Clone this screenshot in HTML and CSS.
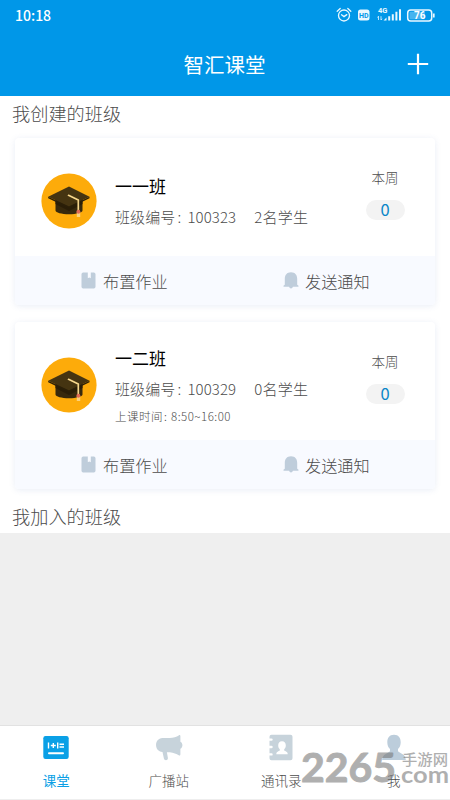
FILE: index.html
```html
<!DOCTYPE html>
<html lang="zh-CN">
<head>
<meta charset="utf-8">
<title>智汇课堂</title>
<link rel="stylesheet" href="styles.css">
</head>
<body>
<svg class="defs" width="0" height="0">
  <symbol id="cap" viewBox="0 0 56 56">
    <circle cx="28" cy="28" r="27.6" fill="#fdab0a"/>
    <path d="M14.5 26v11.5c0 2 6 3.8 13.5 3.8s13.5-1.8 13.5-3.8V26z" fill="#37290d"/>
    <path d="M14.5 28 28 35l13.500-7v3L28 38l-13.500-7z" fill="#2a1e08"/>
    <path d="M28 13.500 48.500 23.800 28 33.500 7.200 23.800z" fill="#453411"/>
    <path d="M7.200 23.800 28 33.500l20.500-9.700v1.500L28 35.200 7.200 25.300z" fill="#2b1f08"/>
    <path d="m27.500 22.300 9.800 4.700v12" fill="none" stroke="#f6d68a" stroke-width="1.700" stroke-linecap="round" stroke-linejoin="round"/>
    <path d="M35.800 39h3.400v5h-3.400z" fill="#fbd27c"/>
    <circle cx="37.400" cy="38.700" r="2" fill="#e06a55"/>
  </symbol>
  <symbol id="book" viewBox="0 0 15 17">
    <path d="M2.200.5h4.600v5.800L8.300 5.400l1.500.9V.5h3Q14.500.5 14.500 2.200v12.600q0 1.700-1.700 1.700H2.200Q.5 16.500.5 14.800V2.200Q.5.5 2.200.5z" fill="#bfcddb"/>
  </symbol>
  <symbol id="bell" viewBox="0 0 16 17">
    <path d="M8 .3c4.100 0 6.200 2.900 6.200 6.500v5.600c0 .8 1.500.8 1.500 1.700 0 .5-.3.700-.8.700H9.900Q9.500 16.500 8 16.500T6.100 14.800h-5c-.5 0-.8-.2-.8-.7 0-.9 1.500-.9 1.500-1.700V6.800C1.800 3.200 3.900.3 8 .3z" fill="#bfcddb"/>
  </symbol>
</svg>

<header class="header">
  <div class="status">
    <span class="time">10:18</span>
    <svg class="status-icons" width="104" height="18" viewBox="0 0 104 18">
      <g fill="none" stroke="#e9f8ff" stroke-width="1.300" stroke-linecap="round">
        <circle cx="8" cy="9.500" r="5.500"/>
        <path d="m5.500 8.800 2.500 1.800 2.800-2M1.200 5.200 4.200 2.500M14.800 5.200l-3-2.700"/>
      </g>
      <rect x="22" y="3.500" width="11.500" height="11" rx="2.500" fill="#e9f8ff"/>
      <text class="t-hd" x="27.700" y="11.600" text-anchor="middle">HD</text>
      <text class="t-4g" x="42" y="7.200">4G</text>
      <path d="M42.500 14v-3.800m-1 1.300 1-1.300M45 10.200V14m1-1.300L45 14" fill="none" stroke="#e9f8ff" stroke-width=".8"/>
      <path d="M47.500 14.500 50.500 11.500v3zM52.200 10.200h2v4.300h-2zM55.800 8.200h2v6.300h-2zM59.400 5.800h2v8.700h-2zM63 3.200h2v11.300h-2z" fill="#e9f8ff"/>
      <rect x="71.700" y="4" width="24" height="11" rx="3" fill="none" stroke="#e9f8ff" stroke-width="1.500"/>
      <rect x="73.500" y="5.800" width="15.500" height="7.400" rx="1" fill="#45b4ef"/>
      <path d="M97.800 7.500v4" stroke="#e9f8ff" stroke-width="1.700"/>
      <text class="t-bat" x="83.700" y="13" text-anchor="middle">76</text>
    </svg>
  </div>
  <div class="titlebar">
    <span></span>
    <h1>智汇课堂</h1>
    <svg class="plus" width="22" height="22" viewBox="0 0 22 22"><path d="M11 .8v20.400M.8 11h20.400" stroke="#fff" stroke-width="2.200"/></svg>
  </div>
</header>

<main class="content">
  <h2 class="section">我创建的班级</h2>
  <article class="card">
    <div class="card-main">
      <svg class="avatar"><use href="#cap"/></svg>
      <div class="info">
        <h3>一一班</h3>
        <p class="meta"><span>班级编号<i>:</i>100323</span><span>2名学生</span></p>
      </div>
      <div class="week"><span>本周</span><b>0</b></div>
    </div>
    <div class="actions">
      <a><svg class="i-book"><use href="#book"/></svg>布置作业</a>
      <a><svg class="i-bell"><use href="#bell"/></svg>发送通知</a>
    </div>
  </article>
  <article class="card">
    <div class="card-main">
      <svg class="avatar"><use href="#cap"/></svg>
      <div class="info">
        <h3>一二班</h3>
        <p class="meta"><span>班级编号<i>:</i>100329</span><span>0名学生</span></p>
        <p class="hours">上课时间<i>:</i>8:50~16:00</p>
      </div>
      <div class="week"><span>本周</span><b>0</b></div>
    </div>
    <div class="actions">
      <a><svg class="i-book"><use href="#book"/></svg>布置作业</a>
      <a><svg class="i-bell"><use href="#bell"/></svg>发送通知</a>
    </div>
  </article>
  <h2 class="section joined">我加入的班级</h2>
</main>

<nav class="tabs">
  <a class="tab active">
    <svg viewBox="0 0 28 28"><rect x="1.300" y="3" width="25.400" height="23" rx="2.200" fill="#0aa0e6"/><path d="M6.500 9.500v6M8.800 12.500h5M11.300 10v5M15.700 9.500v6M17.500 11.200h4.500M17.500 14h4.500" stroke="#fff" stroke-width="1.400"/><path d="M7 20.200h14" stroke="#fff" stroke-width="2" stroke-linecap="round"/></svg>
    <span>课堂</span>
  </a>
  <a class="tab">
    <svg viewBox="0 0 28 28"><path d="M7.500 5h7.200c3.500 0 7-1.400 9-2.600 1-.6 1.700-.3 1.700.8v5.500c2.700 1.200 2.700 6 0 7v5.600c0 1.200-.8 1.500-1.700.9-2-1.300-5.200-2.700-8.800-3h-3l1 5.700c.3 2.700-3.500 3-4 .6L7.500 19C-1 18.500-1.200 5.500 7.500 5z" fill="#c7d3db"/></svg>
    <span>广播站</span>
  </a>
  <a class="tab">
    <svg viewBox="0 0 28 28"><path d="M4.500 1.800h19q2 0 2 2v21.400q0 2-2 2h-19q-2 0-2-2v-2.600h2a1 1 0 0 0 0-2.400h-2v-5h2a1 1 0 0 0 0-2.400h-2v-5h2a1 1 0 0 0 0-2.400h-2V3.800q0-2 2-2z" fill="#c7d3db"/><path d="M15 8.200c2.600 0 3.800 1.800 3.800 4.200 0 1.700-.7 3-1.600 3.800v1.300c1 .8 3.500 1 3.500 3.700H9.300c0-2.700 2.500-2.900 3.500-3.700v-1.300c-.9-.8-1.600-2.100-1.600-3.800 0-2.400 1.200-4.200 3.800-4.200z" fill="#fff"/></svg>
    <span>通讯录</span>
  </a>
  <a class="tab">
    <svg viewBox="0 0 28 28"><path d="M14 1.800c4.700 0 6.700 3.300 6.700 7.400 0 3-1 5.300-2.700 6.800v2.200c2.300 2.300 7.500 2.500 7.800 8.800H2.200c.3-6.300 5.500-6.500 7.800-8.800V16c-1.700-1.500-2.700-3.800-2.700-6.800 0-4.100 2-7.400 6.700-7.400z" fill="#bccddb"/></svg>
    <span>我</span>
  </a>
</nav>
<svg class="watermark" width="150" height="54" viewBox="0 0 150 54">
  <text class="wm-num" x="1" y="37" textLength="95" lengthAdjust="spacingAndGlyphs">2265</text>
  <text class="wm-cn" x="102" y="20" textLength="46" lengthAdjust="spacingAndGlyphs">手游网</text>
  <text class="wm-com" x="101" y="37.500" textLength="48" lengthAdjust="spacingAndGlyphs">com</text>
</svg>
</body>
</html>
```
FILE: styles.css
```css
* { box-sizing: border-box; margin: 0; padding: 0; }
body {
  width: 450px;
  height: 800px;
  overflow: hidden;
  position: relative;
  display: flex;
  flex-direction: column;
  background: #efefef;
  color: #4c4c4c;
  font-family: "Noto Sans CJK SC", sans-serif;
  font-weight: 300;
  white-space: nowrap;
}
svg { display: block; flex: none; }
.defs { position: absolute; }
i { display: inline-block; font-style: normal; }

.header { height: 96px; background: #0097e8; color: #fff; flex: none; }
.status {
  height: 32px;
  padding: 0 14px 0 15px;
  display: flex;
  align-items: center;
  justify-content: space-between;
}
.status-icons { margin-top: -2px; margin-right: -4px; }
.time { font: 500 14px/30px "Noto Sans CJK SC", sans-serif; margin-top: -2px; }
.status text { font-family: Roboto, sans-serif; font-weight: 700; }
.t-hd { font-size: 7px; fill: #0097e8; }
.t-4g { font-size: 7.500px; fill: #e9f8ff; }
.t-bat { font-size: 10px; fill: #fff; }
.titlebar {
  height: 64px;
  padding-right: 21px;
  display: grid;
  grid-template-columns: 1fr auto 1fr;
  align-items: center;
}
.titlebar h1 { font-size: 20.500px; font-weight: 400; line-height: 64px; margin-left: 20px; }
.plus { justify-self: end; }

.content { background: #fff; height: 437px; flex: none; }
.section {
  height: 42px;
  padding-left: 12px;
  font-size: 18.200px;
  line-height: 35px;
  font-weight: 300;
}
.joined { margin-top: -7px; }
.card {
  height: 167px;
  margin: 0 15px 17px;
  border-radius: 4px;
  background: #fff;
  box-shadow: 0 1px 6px rgba(70, 110, 180, 0.12);
  overflow: hidden;
}
.card-main {
  height: 118px;
  padding: 0 30px 0 26px;
  display: flex;
  align-items: center;
}
.avatar { width: 56px; height: 56px; margin-top: 8px; }
.info { flex: 1; margin-left: 18px; padding-top: 9px; }
.info h3 { font-size: 17px; line-height: 30px; font-weight: 400; color: #000; }
.meta { display: flex; gap: 18px; font-size: 15px; line-height: 31px; letter-spacing: 0.1px; }
.meta span + span { letter-spacing: 0.3px; }
.meta i { width: 12px; padding-left: 2px; }
.hours { font-size: 11.500px; line-height: 24px; letter-spacing: 0.5px; }
.hours i { width: 8px; padding-left: 1px; }
.week {
  width: 40px;
  display: flex;
  flex-direction: column;
  align-items: center;
  gap: 13px;
  margin-top: -8px;
  font-size: 13.500px;
  line-height: 20px;
}
.week b {
  width: 39px;
  height: 20px;
  border-radius: 10px;
  background: #f3f3f3;
  color: #0b86c8;
  font-size: 16.500px;
  font-weight: 400;
  line-height: 19px;
  text-align: center;
}
.actions {
  height: 49px;
  background: #f8faff;
  display: grid;
  grid-template-columns: 202px 1fr;
  padding-left: 66px;
}
.actions a { display: flex; align-items: center; font-size: 16.200px; gap: 7px; }
.i-book { width: 15px; height: 17px; }
.i-bell { width: 16px; height: 17px; }
.actions a:last-child { gap: 6px; }

.tabs {
  height: 75px;
  margin-top: auto;
  display: grid;
  grid-template-columns: repeat(4, 1fr);
  background: #fff;
  border-top: 1px solid #e2e2e2;
  border-bottom: 1px solid #eee;
}
.tab { display: flex; flex-direction: column; align-items: center; padding-top: 7px; gap: 7px; font-size: 13.500px; line-height: 24px; }
.tab svg { width: 28px; height: 28px; }
.active { color: #0a9fe5; font-weight: 400; }

.watermark { position: absolute; left: 300px; top: 745px; fill: #777; opacity: 0.58; }
.wm-num { font: 700 41px Lato, sans-serif; stroke: #777; stroke-width: 1px; stroke-linejoin: round; }
.wm-cn { font: 500 14.500px "Noto Sans CJK SC", sans-serif; }
.wm-com { font: 700 23px Lato, sans-serif; }
```
